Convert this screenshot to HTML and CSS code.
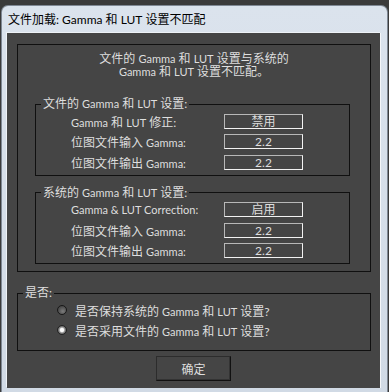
FILE: index.html
```html
<!DOCTYPE html>
<html lang="zh-CN">
<head>
    <meta charset="UTF-8">
    <title>文件加载: Gamma 和 LUT 设置不匹配</title>
    <link rel="stylesheet" href="styles.css">
</head>
<body>
    <div class="window">
        <div class="titlebar">文件加载: <span lang="en">Gamma</span> 和 <span lang="en">LUT</span> 设置不匹配</div>

        <div class="client">
            <div class="panel">
                <p class="notice">文件的 <span lang="en">Gamma</span> 和 <span lang="en">LUT</span> 设置与系统的<br><span lang="en">Gamma</span> 和 <span lang="en">LUT</span> 设置不匹配。</p>

                <fieldset class="group">
                    <legend>文件的 <span lang="en">Gamma</span> 和 <span lang="en">LUT</span> 设置:</legend>
                    <div class="row">
                        <span class="label"><span lang="en">Gamma</span> 和 <span lang="en">LUT</span> 修正:</span>
                        <span class="value">禁用</span>
                    </div>
                    <div class="row">
                        <span class="label">位图文件输入 <span lang="en">Gamma:</span></span>
                        <span class="value" lang="en">2.2</span>
                    </div>
                    <div class="row">
                        <span class="label">位图文件输出 <span lang="en">Gamma:</span></span>
                        <span class="value" lang="en">2.2</span>
                    </div>
                </fieldset>

                <fieldset class="group">
                    <legend>系统的 <span lang="en">Gamma</span> 和 <span lang="en">LUT</span> 设置:</legend>
                    <div class="row">
                        <span class="label" lang="en">Gamma &amp; LUT Correction:</span>
                        <span class="value">启用</span>
                    </div>
                    <div class="row">
                        <span class="label">位图文件输入 <span lang="en">Gamma:</span></span>
                        <span class="value" lang="en">2.2</span>
                    </div>
                    <div class="row">
                        <span class="label">位图文件输出 <span lang="en">Gamma:</span></span>
                        <span class="value" lang="en">2.2</span>
                    </div>
                </fieldset>
            </div>

            <fieldset class="choice">
                <legend>是否:</legend>
                <label class="option">
                    <span class="radio"></span>
                    <span>是否保持系统的 <span lang="en">Gamma</span> 和 <span lang="en">LUT</span> 设置?</span>
                </label>
                <label class="option">
                    <span class="radio checked"></span>
                    <span>是否采用文件的 <span lang="en">Gamma</span> 和 <span lang="en">LUT</span> 设置?</span>
                </label>
            </fieldset>

            <div class="actions">
                <button class="ok-button">确定</button>
            </div>
        </div>
    </div>
</body>
</html>
```

FILE: styles.css
```css
:root {
    --desk: #3b3b3b;
    --frame-edge: #7f8894;
    --client: #454545;
    --text: #dedede;
    --line: #101010;
}

* {
    box-sizing: border-box;
}

body {
    margin: 0;
    padding: 5px 0 0 1px;
    background: var(--desk);
    font-family: 'Lato', 'Noto Sans CJK SC', sans-serif;
    font-size: 12px;
    color: var(--text);
}

/* 英文部分字号略小 */
[lang="en"] {
    font-size: 11px;
}

/* 窗口外框 */
.window {
    width: 387px;
    background: linear-gradient(180deg, #dbe3ed 0%, #d1dae5 100%);
    border: 1px solid var(--frame-edge);
    border-bottom: none;
    border-radius: 7px 7px 0 0;
    padding: 0 6px 4px 5px;
}

.titlebar {
    height: 27px;
    line-height: 27px;
    padding-left: 1px;
    color: #000;
    white-space: nowrap;
}

.titlebar [lang="en"] {
    font-size: 12px;
}

.client {
    height: 355px;
    background: var(--client);
    border-right: 1px solid #f4f6f9;
    box-shadow: -1px -1px 0 #eef2f6;
    padding: 11px 0 0 10px;
}

/* 上方大框 */
.panel {
    width: 354px;
    border: 1px solid var(--line);
    padding: 7px 0 7px 0;
}

.notice {
    margin: 0 0 19px 0;
    text-align: center;
    line-height: 13px;
}

.group {
    width: 315px;
    margin: 0 0 10px 17px;
    padding: 0 0 2px 0;
    border: 1px solid var(--line);
}

.group:last-child {
    margin-bottom: 0;
}

.group legend,
.choice legend {
    margin-left: 5px;
    padding: 0 2px;
    line-height: 14px;
}

.row {
    display: flex;
    align-items: center;
    height: 20.5px;
    padding-left: 35px;
}

.label {
    width: 153px;
    white-space: nowrap;
}

.value {
    width: 79px;
    height: 15px;
    line-height: 13px;
    text-align: center;
    border: 1px solid;
    border-color: #b8b8b8 #f2f2f2 #f2f2f2 #b8b8b8;
}

.value[lang="en"] {
    font-size: 12px;
}

/* 是否 选项 */
.choice {
    width: 354px;
    margin: 14px 0 0 0;
    padding: 0 0 10px 0;
    border: 1px solid var(--line);
}

.option {
    display: flex;
    align-items: center;
    height: 20px;
    padding-left: 39px;
    gap: 8px;
    white-space: nowrap;
}

.radio {
    width: 10px;
    height: 10px;
    border-radius: 50%;
    border: 1px solid #181818;
    background: radial-gradient(circle at 60% 65%, #7c7c7c 0%, #5a5a5a 45%, #333 100%);
}

.radio.checked {
    border-color: #222;
    background: radial-gradient(circle, #ffffff 0%, #f6f6f6 32%, #9a9a9a 48%, #5c5c5c 75%, #3c3c3c 100%);
}

.actions {
    display: flex;
    justify-content: center;
    padding-right: 10px;
    margin-top: 5px;
}

.ok-button {
    width: 75px;
    height: 25px;
    background: var(--client);
    color: var(--text);
    font-family: inherit;
    font-size: 12px;
    border: 1px solid;
    border-color: #2c2c2c #111 #111 #2c2c2c;
    box-shadow: inset -1px -1px 0 #333;
    padding: 0;
}
```
